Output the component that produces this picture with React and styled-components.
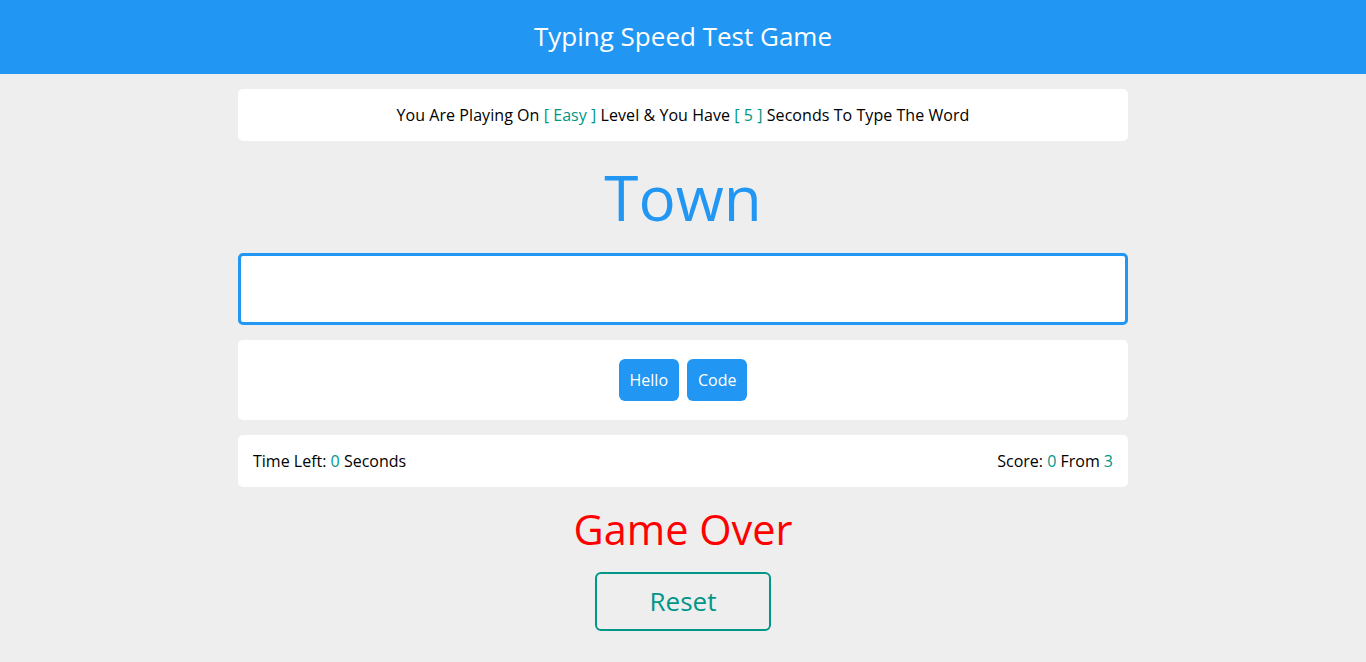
import React from 'react';
import styled, { createGlobalStyle } from 'styled-components';

const GlobalStyle = createGlobalStyle`
    *{
        box-sizing: border-box;
    }
    body{
        margin: 0;
        background: #eeeeee;
        font-family: "Open Sans", "DejaVu Sans", sans-serif;
        color: #000;
    }
`;

const words = ['Hello', 'Code'];

function App() {
    return (
        <>
            <GlobalStyle />
            <Header>Typing Speed Test Game</Header>
            <Game>
                <Message>
                    You Are Playing On <Accent>[ Easy ]</Accent> Level &amp; You Have <Accent>[ 5 ]</Accent> Seconds To Type The Word
                </Message>
                <TheWord>Town</TheWord>
                <Input type="text" />
                <Upcoming>
                    {words.map(w => <WordChip key={w}>{w}</WordChip>)}
                </Upcoming>
                <Control>
                    <span>Time Left: <Accent>0</Accent> Seconds</span>
                    <span>Score: <Accent>0</Accent> From <Accent>3</Accent></span>
                </Control>
                <Finish>Game Over</Finish>
                <ResetRow>
                    <ResetButton>Reset</ResetButton>
                </ResetRow>
            </Game>
        </>
    );
}

const Header = styled.div`
    height: 74px;
    padding-bottom: 2px;
    background: #2196f3;
    color: #fff;
    font-size: 26px;
    display: flex;
    align-items: center;
    justify-content: center;
`;

const Game = styled.div`
    width: 890px;
    margin: 0 auto;
    padding-top: 15px;
`;

const Accent = styled.span`
    color: #009688;
`;

const Message = styled.div`
    background: #fff;
    border-radius: 5px;
    padding: 15px;
    font-size: 16px;
    line-height: 22px;
    letter-spacing: 0.06px;
    text-align: center;
`;

const TheWord = styled.div`
    font-size: 62px;
    line-height: 82px;
    color: #2196f3;
    text-align: center;
    margin: 15px 0;
`;

const Input = styled.input`
    display: block;
    width: 100%;
    height: 72px;
    border: 3px solid #2196f3;
    border-radius: 5px;
    outline: none;
    font-size: 24px;
    font-family: inherit;
    text-align: center;
    background: #fff;
`;

const Upcoming = styled.div`
    margin-top: 15px;
    height: 80px;
    background: #fff;
    border-radius: 5px;
    display: flex;
    align-items: center;
    justify-content: center;
    gap: 8px;
`;

const WordChip = styled.div`
    background: #2196f3;
    color: #fff;
    border-radius: 6px;
    padding: 10px 11px;
    font-size: 16px;
    line-height: 22px;
`;

const Control = styled.div`
    margin-top: 15px;
    background: #fff;
    border-radius: 5px;
    padding: 15px;
    font-size: 16px;
    line-height: 22px;
    display: flex;
    justify-content: space-between;
`;

const Finish = styled.div`
    margin-top: 15px;
    color: red;
    font-size: 41.5px;
    line-height: 54px;
    text-align: center;
`;

const ResetRow = styled.div`
    display: flex;
    justify-content: center;
    margin-top: 16px;
`;

const ResetButton = styled.button`
    width: 176px;
    height: 59px;
    padding: 0 0 2px;
    background: transparent;
    border: 2px solid #009688;
    border-radius: 6px;
    color: #009688;
    font-family: inherit;
    font-size: 26px;
    cursor: pointer;
`;

export default App;
